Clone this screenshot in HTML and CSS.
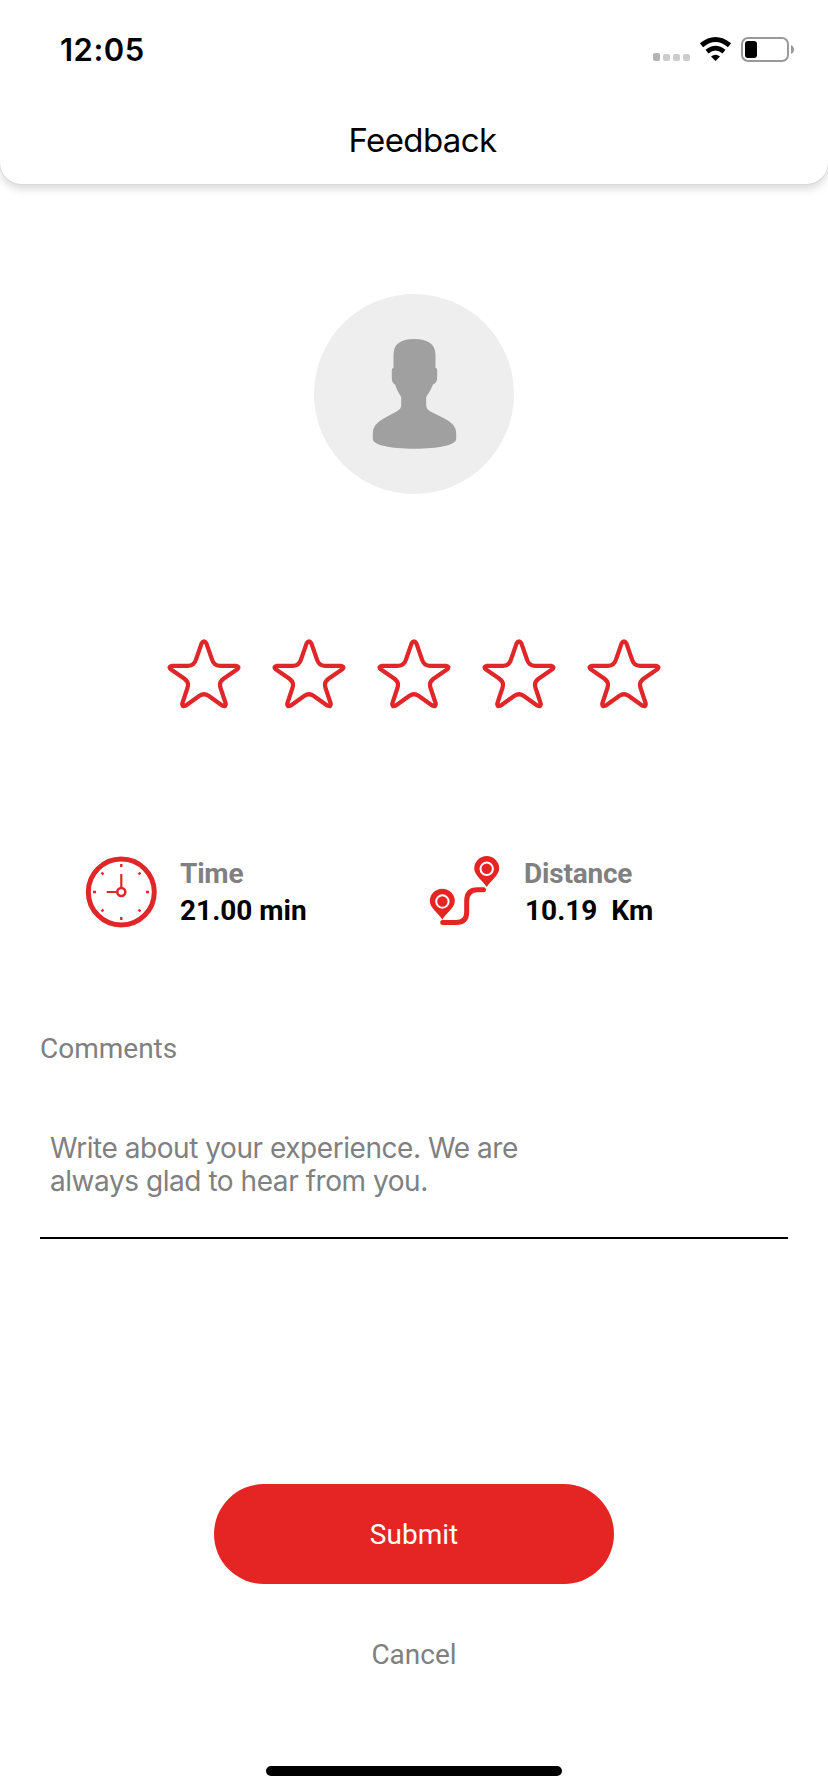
FILE: index.html
```html
<!DOCTYPE html>
<html lang="en">
<head>
<meta charset="utf-8">
<title>Feedback</title>
<link rel="stylesheet" href="styles.css">
</head>
<body>
<svg class="defs" aria-hidden="true">
  <symbol id="star" viewBox="0 0 74 70">
    <path d="M34.6 4.4Q37 .2 39.4 4.4L45 20.500Q46.800 26.800 53 26.800L69 26.800Q73 27.600 70.300 30.200L56.500 39.700Q51.800 43.200 53.400 48.500L58.700 64.500Q59.200 68.500 55.500 66.700L41.500 56.700Q37 53.800 32.500 56.700L18.500 66.700Q14.800 68.500 15.300 64.500L20.600 48.500Q22.200 43.200 17.500 39.700L3.700 30.200Q1 27.600 5 26.800L21 26.800Q27.200 26.800 29 20.500Z" fill="none" stroke="#e02628" stroke-width="4.200" stroke-linejoin="round"/>
  </symbol>
</svg>
<header class="header">
  <div class="status">
    <span class="clock">12:05</span>
    <svg class="status-icons" width="144" height="30" viewBox="652 34 144 30">
      <rect x="653" y="53" width="7" height="8" rx="2" fill="#b3b3b3"/>
      <rect x="663" y="54" width="7" height="7" rx="2" fill="#ccc"/>
      <rect x="673" y="54" width="7" height="7" rx="2" fill="#ccc"/>
      <rect x="683" y="54" width="7" height="7" rx="2" fill="#ccc"/>
      <path d="M701.500 45.300Q715.500 33.700 729.500 45.300" fill="none" stroke="#000" stroke-width="5"/>
      <path d="M707 51.600Q715.500 44.800 724 51.600" fill="none" stroke="#000" stroke-width="4.600"/>
      <path d="M711 56.500Q715.500 53 720 56.500L715.500 61Z"/>
      <rect x="742" y="38" width="46" height="23" rx="6" fill="none" stroke="#999" stroke-width="2"/>
      <rect x="745" y="41" width="12" height="17" rx="3"/>
      <path d="M791 45Q794 46.500 794 49.500T791 54Z" fill="#999"/>
    </svg>
  </div>
  <h1 class="title">Feedback</h1>
</header>
<main class="main">
  <svg class="avatar" width="200" height="200" viewBox="0 0 200 200">
    <circle cx="100" cy="100" r="100" fill="#eee"/>
    <path d="M79 74V61C79 50 86 45 99.700 45S121 50 121 61V74Q123 74 122.700 78V84Q122.500 89 118.500 90.500Q116 97 111.700 103V111Q111.700 115 116 117.500L129 124Q141.700 130 141.700 139V145C141.700 151 124 154.700 100 154.700S58.300 151 58.300 145V139Q58.300 130 70 124L82 117.500Q86.700 115 86.700 111V103Q82.500 97 80.500 90.500Q77.300 89 77.300 84V78Q77 74 79 74Z" transform="translate(.5 0)" fill="#a0a0a0"/>
  </svg>
  <div class="stars">
    <svg class="star"><use href="#star"/></svg>
    <svg class="star"><use href="#star"/></svg>
    <svg class="star"><use href="#star"/></svg>
    <svg class="star"><use href="#star"/></svg>
    <svg class="star"><use href="#star"/></svg>
  </div>
  <section class="stats">
    <div class="stat">
      <svg class="stat-icon" width="72" height="72" viewBox="0 0 72 72" fill="none" stroke="#e02628">
        <circle cx="36.300" cy="36" r="33" stroke-width="5"/>
        <circle cx="36.300" cy="36" r="4" stroke-width="2.600"/>
        <path d="M36.300 32V18M32 36H21.700" stroke-width="2.200"/>
        <path d="M36.300 8v3M36.300 61v3M8 36h3M61 36h3M16.500 16.500l2 2M53.500 53.500l2 2M55.500 16.500l-2 2M18.500 53.500l-2 2" stroke-width="2.400"/>
      </svg>
      <div class="stat-text">
        <span class="label">Time</span>
        <span class="value">21.00 min</span>
      </div>
    </div>
    <div class="stat stat-distance">
      <svg class="stat-icon" width="72" height="72" viewBox="0 2 72 72" fill="#e52523">
        <path d="M14.700 68.500H28Q38.700 68.500 38.700 58V47Q38.700 35.700 49.500 35.700H55.500" fill="none" stroke="#e52523" stroke-width="5" stroke-linecap="round"/>
        <path d="M58.700 33C55 27 46.200 21 46.200 14.500A12.500 12.500 0 0 1 71.200 14.500C71.200 21 62.500 27 58.700 33Z"/>
        <path d="M14.300 65.500C10.600 59.500 1.800 53.500 1.800 47.200A12.500 12.500 0 0 1 26.800 47.200C26.800 53.500 18 59.500 14.300 65.500Z"/>
        <circle cx="58.700" cy="14.800" r="6.200" stroke="#fff" stroke-width="2"/>
        <circle cx="14.400" cy="47.500" r="6.200" stroke="#fff" stroke-width="2"/>
      </svg>
      <div class="stat-text">
        <span class="label">Distance</span>
        <span class="value">10.19&nbsp; Km</span>
      </div>
    </div>
  </section>
  <section class="comments">
    <h2 class="comments-title">Comments</h2>
    <p class="comments-field"><span class="line">Write about your experience. We are</span> <span class="line">always glad to hear from you.</span></p>
  </section>
  <button class="submit" type="button">Submit</button>
  <button class="cancel" type="button">Cancel</button>
  <div class="home-bar"></div>
</main>
</body>
</html>
```
FILE: styles.css
```css
* { box-sizing: border-box; }
body {
  margin: 0;
  height: 1792px;
  background: #fff;
  font-family: Roboto, sans-serif;
  font-size: 28px;
  overflow: hidden;
}
svg { display: block; flex: none; }
.defs { display: none; }
.header {
  height: 184px;
  background: #fff;
  border-radius: 0 0 21px 21px;
  box-shadow: 0 5px 9px rgba(0, 0, 0, .14), 0 0 1px rgba(0, 0, 0, .3);
  font-family: Inter, sans-serif;
}
.status {
  display: flex;
  justify-content: space-between;
  height: 100px;
  padding: 30px 32px 0 60px;
}
.clock { font-size: 31px; font-weight: 600; line-height: 40px; letter-spacing: .5px; }
.status-icons { margin-top: 4px; }
.title {
  margin: 20px 0 0;
  padding-left: 17px;
  text-align: center;
  font-size: 33px;
  font-weight: 400;
  line-height: 40px;
  letter-spacing: -.6px;
}
.main { display: flex; flex-direction: column; align-items: center; padding-top: 110px; }
.stars { display: flex; gap: 31px; margin-top: 145px; }
.star { width: 74px; height: 70px; }
.stats { display: flex; align-self: stretch; margin-top: 146px; padding-left: 85px; }
.stat { display: flex; gap: 23px; width: 343px; }
.stat-distance { gap: 24px; }
.stat-icon { margin-top: 1px; }
.stat-text { display: flex; flex-direction: column; font-weight: 700; line-height: 37px; white-space: pre; }
.label { color: #808080; letter-spacing: -.2px; }
.stat-distance .value { padding-left: 1px; }
.comments { align-self: stretch; margin: 104px 40px 0; color: #808080; }
.comments-title { margin: 0; font-size: 28px; font-weight: 400; line-height: 32px; }
.comments-field {
  margin: 67px 0 0;
  height: 107px;
  padding-left: 10px;
  border-bottom: 2px solid #000;
  font-family: Inter, sans-serif;
  line-height: 33.400px;
  letter-spacing: -.45px;
}
.line { display: block; white-space: nowrap; }
.submit, .cancel { border: 0; font: 400 28px/34px Roboto, sans-serif; }
.submit { width: 400px; height: 100px; margin-top: 245px; padding: 1px 0 0; border-radius: 50px; background: #e52523; color: #fff; }
.cancel { margin-top: 54px; padding: 0; background: none; color: #808080; }
.home-bar { width: 296px; height: 10px; margin-top: 94px; border-radius: 5px; background: #000; }
```
